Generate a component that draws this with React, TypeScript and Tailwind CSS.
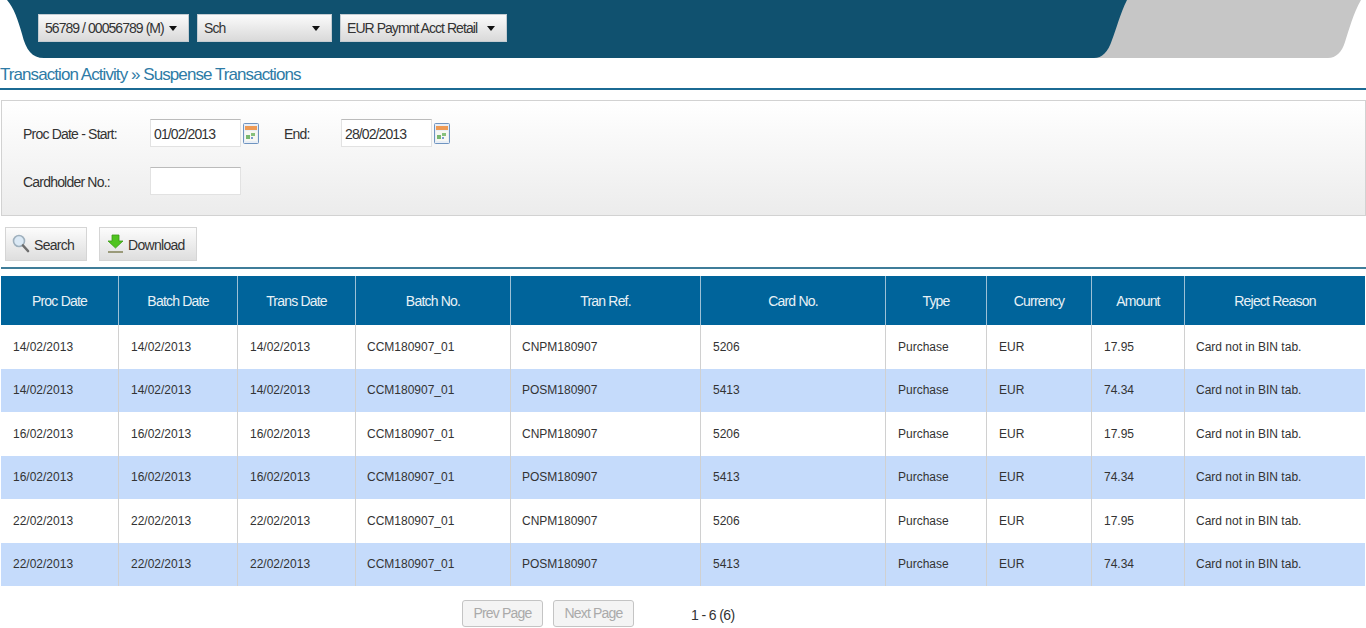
const columns = [
  { label: 'Proc Date', width: 'w-[118px]', pad: 'pl-[12px]' },
  { label: 'Batch Date', width: 'w-[119px]', pad: 'pl-[12px]' },
  { label: 'Trans Date', width: 'w-[118px]', pad: 'pl-[12px]' },
  { label: 'Batch No.', width: 'w-[155px]', pad: 'pl-[11px]' },
  { label: 'Tran Ref.', width: 'w-[190px]', pad: 'pl-[11px]' },
  { label: 'Card No.', width: 'w-[185px]', pad: 'pl-[12px]' },
  { label: 'Type', width: 'w-[101px]', pad: 'pl-[12px]' },
  { label: 'Currency', width: 'w-[105px]', pad: 'pl-[12px]' },
  { label: 'Amount', width: 'w-[93px]', pad: 'pl-[12px]' },
  { label: 'Reject Reason', width: 'w-[180px]', pad: 'pl-[11px]' },
];

const rows = [
  ['14/02/2013', 'CNPM180907', '5206', '17.95'],
  ['14/02/2013', 'POSM180907', '5413', '74.34'],
  ['16/02/2013', 'CNPM180907', '5206', '17.95'],
  ['16/02/2013', 'POSM180907', '5413', '74.34'],
  ['22/02/2013', 'CNPM180907', '5206', '17.95'],
  ['22/02/2013', 'POSM180907', '5413', '74.34'],
];

function Caret() {
  return <span className="w-0 h-0 border-x-[4px] border-x-transparent border-t-[5px] border-t-[#111]" />;
}

function HeaderSelect({ label, width }: { label: string; width: string }) {
  return (
    <div className={`${width} h-[28px] flex items-center justify-between pl-[6px] pr-[11px] whitespace-nowrap text-[14px] tracking-[-0.95px] text-[#333] bg-gradient-to-b from-[#fbfbfb] to-[#d9d9d9] border border-[#c4ccd2]`}>
      <span>{label}</span>
      <Caret />
    </div>
  );
}

function CalendarIcon() {
  return (
    <svg width="16" height="21" viewBox="0 0 16 21" className="shrink-0">
      <rect x="0.5" y="0.5" width="15" height="20" rx="1" fill="#e8eef6" stroke="#6f94c0" />
      <rect x="2" y="3" width="12" height="4" fill="#ee9a55" />
      <rect x="2" y="8" width="12" height="10" fill="#f7f7f2" />
      <rect x="3" y="12" width="4" height="4" fill="#79b76f" />
      <rect x="8" y="10" width="4" height="3" fill="#86c07b" />
      <rect x="8" y="14" width="2" height="2" fill="#7a9ccc" />
    </svg>
  );
}

function TextBox({ value }: { value?: string }) {
  return (
    <div className="w-[91px] h-[28px] flex items-center pl-[3px] pt-[2px] bg-white border border-[#e2e2e2] border-t-[#bbb] text-[14px] tracking-[-0.9px] text-[#333]">
      {value}
    </div>
  );
}

export default function App() {
  return (
    <div className="w-[1366px] h-[628px] overflow-hidden bg-white font-['Liberation_Sans',Arial,sans-serif]">
      <header className="relative h-[58px]">
        <svg width="1366" height="58" viewBox="0 0 1366 58" className="absolute inset-0">
          <path d="M1120 0H1361C1353 14 1349 30 1345 42C1342 52 1336 58 1328 58H1090L1120 0Z" fill="#c6c6c6" />
          <path d="M7 0H1127C1120 14 1116 30 1112 40C1108 52 1102 58 1094 58H44C32 58 26 50 22 34C18 20 14 8 7 0Z" fill="#10516f" />
        </svg>
        <div className="relative flex gap-[8px] pl-[38px] pt-[14px]">
          <HeaderSelect label="56789 / 00056789 (M)" width="w-[151px]" />
          <HeaderSelect label="Sch" width="w-[135px]" />
          <HeaderSelect label="EUR Paymnt Acct Retail" width="w-[167px]" />
        </div>
      </header>

      <h1 className="h-[32px] pt-[3px] flex items-center text-[17px] font-normal tracking-[-0.93px] text-[#2e7ba6] border-b-2 border-[#1b6a93]">
        Transaction Activity » Suspense Transactions
      </h1>

      <section className="mt-[10px] ml-[1px] w-[1365px] h-[116px] pl-[21px] pt-[18px] flex flex-col gap-[20px] border border-[#d2d2d2] bg-gradient-to-b from-white to-[#ececec] text-[14px] tracking-[-0.8px] text-[#333]">
        <div className="flex items-center">
          <span className="w-[127px] pt-[2px]">Proc Date - Start:</span>
          <TextBox value="01/02/2013" />
          <span className="ml-[2px]"><CalendarIcon /></span>
          <span className="ml-[25px] w-[57px] pt-[2px]">End:</span>
          <TextBox value="28/02/2013" />
          <span className="ml-[2px]"><CalendarIcon /></span>
        </div>
        <div className="flex items-center">
          <span className="w-[127px] pt-[2px]">Cardholder No.:</span>
          <TextBox />
        </div>
      </section>

      <div className="flex gap-[12px] pl-[5px] pt-[11px] text-[14px] tracking-[-0.7px] text-[#333]">
        <button className="w-[82px] h-[34px] flex items-center pl-[6px] gap-[4px] border border-[#d5d5d5] bg-gradient-to-b from-[#fcfcfc] to-[#dedede]">
          <svg width="18" height="20" viewBox="0 0 18 20">
            <circle cx="7" cy="7" r="5.5" fill="#dbe9f5" stroke="#9fb0bd" strokeWidth="1.6" />
            <path d="M11 11.5L16 17" stroke="#6e6e6e" strokeWidth="2.6" strokeLinecap="round" />
          </svg>
          <span className="pt-[3px]">Search</span>
        </button>
        <button className="w-[98px] h-[34px] flex items-center pl-[7px] gap-[4px] border border-[#d5d5d5] bg-gradient-to-b from-[#fcfcfc] to-[#dedede]">
          <svg width="17" height="21" viewBox="0 0 17 21">
            <path d="M5 1H12V7H16L8.5 14L1 7H5Z" fill="#4fc41f" stroke="#3c9a18" strokeWidth="0.8" />
            <path d="M1 18H16" stroke="#9a9a7a" strokeWidth="2" />
          </svg>
          <span className="pt-[3px]">Download</span>
        </button>
      </div>

      <div className="mt-[6px] ml-[1px] border-b-2 border-[#3f7d99]" />

      <div className="mt-[7px] ml-[1px] w-[1364px]">
        <div className="flex h-[49px] bg-[#00649b] text-[#e8f1f6] text-[14px] tracking-[-0.8px]">
          {columns.map((col, i) => (
            <div key={col.label} className={`${col.width} pt-[2px] flex items-center justify-center ${i < 9 ? 'border-r border-[#9cc0d6]' : ''}`}>
              {col.label}
            </div>
          ))}
        </div>
        {rows.map((row, r) => {
          const cells = [row[0], row[0], row[0], 'CCM180907_01', row[1], row[2], 'Purchase', 'EUR', row[3], 'Card not in BIN tab.'];
          return (
            <div key={r} className={`flex h-[43.5px] text-[12px] text-[#333] ${r % 2 ? 'bg-[#c5dbfb]' : 'bg-white'}`}>
              {cells.map((cell, i) => (
                <div key={i} className={`${columns[i].width} ${columns[i].pad} flex items-center ${i < 9 ? 'border-r border-[#d0d0d0]' : ''}`}>
                  {cell}
                </div>
              ))}
            </div>
          );
        })}
      </div>

      <div className="flex items-start pt-[14px] pl-[462px] text-[14px] tracking-[-0.8px]">
        <button className="w-[81px] h-[27px] rounded-[3px] border border-[#c4c4c4] bg-[#f4f4f4] text-[#aaa]">Prev Page</button>
        <button className="ml-[10px] w-[81px] h-[27px] rounded-[3px] border border-[#c4c4c4] bg-[#f4f4f4] text-[#aaa]">Next Page</button>
        <span className="ml-[57px] mt-[5px] tracking-[-0.6px] text-[#333]">1 - 6 (6)</span>
      </div>
    </div>
  );
}
